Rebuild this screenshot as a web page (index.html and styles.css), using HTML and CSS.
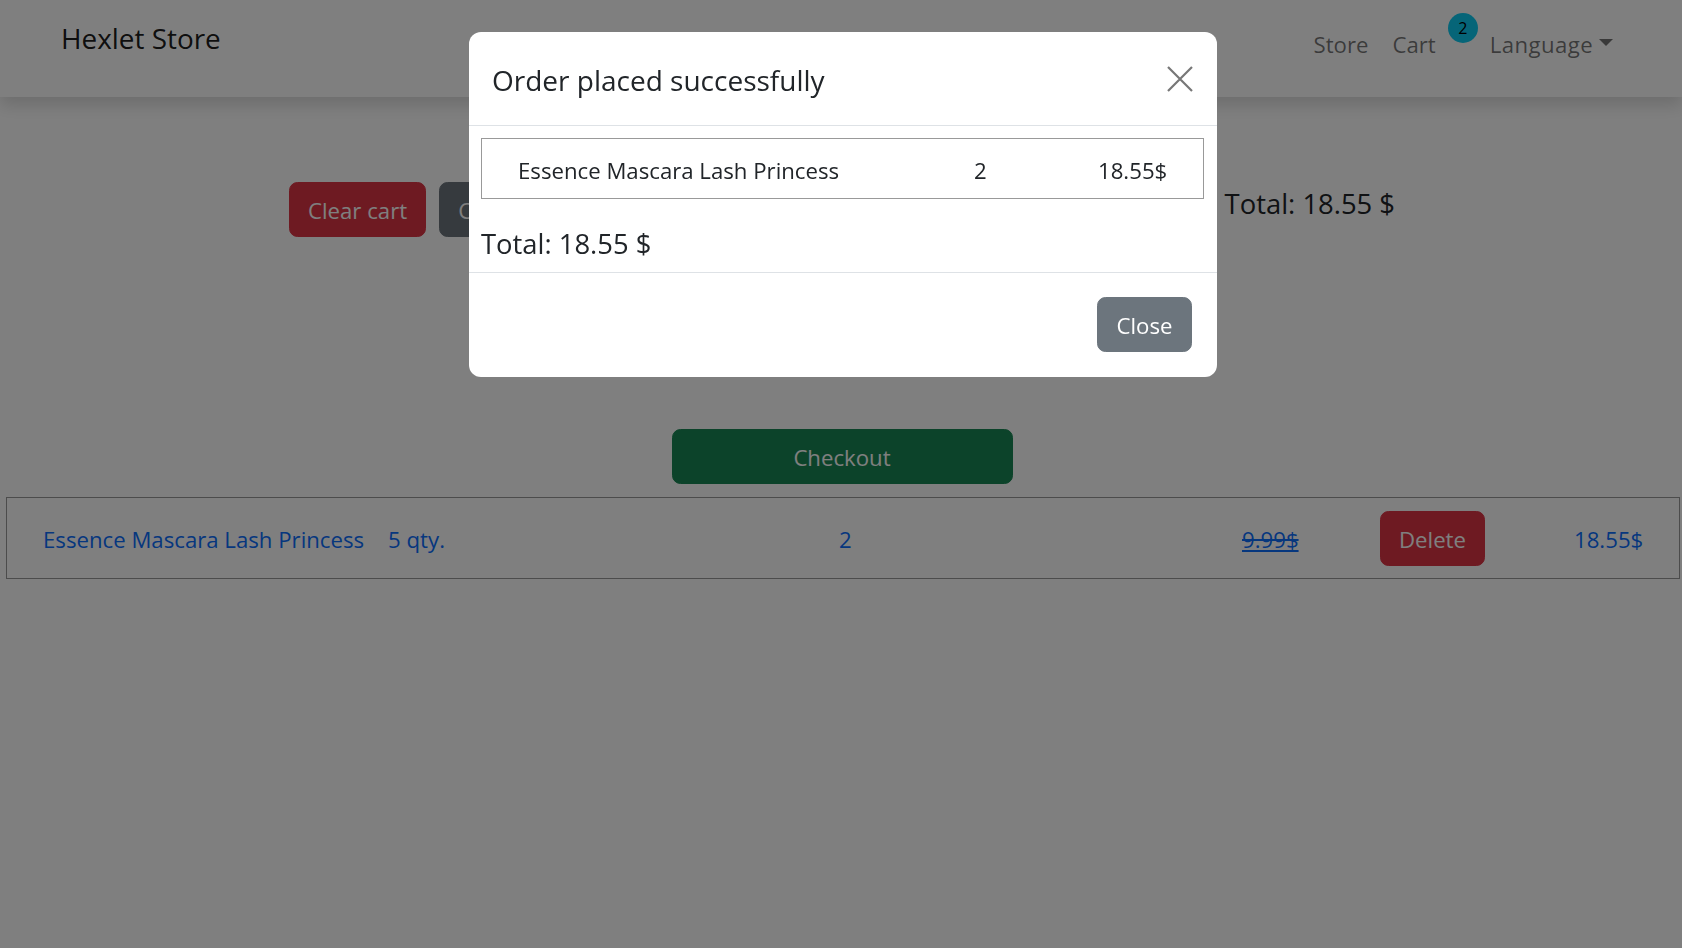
FILE: index.html
```html
<!DOCTYPE html>
<html lang="en">
<head>
<meta charset="utf-8">
<title>Hexlet Store</title>
<link rel="stylesheet" href="styles.css">
</head>
<body>
<nav class="navbar">
  <a class="brand" href="#">Hexlet Store</a>
  <div class="nav-links">
    <a class="nav-link" href="#">Store</a>
    <a class="nav-link" href="#">Cart</a>
    <span class="badge">2</span>
    <a class="nav-link dropdown" href="#"><span class="lang">Language</span><span class="caret"></span></a>
  </div>
</nav>

<main class="page">
  <div class="cart-head">
    <div class="actions">
      <button class="btn btn-danger">Clear cart</button>
      <button class="btn btn-secondary">Continue shopping</button>
    </div>
    <div class="total">Total: 18.55 $</div>
  </div>
  <div class="checkout-wrap">
    <button class="btn btn-success checkout">Checkout</button>
  </div>
  <div class="cart-row">
    <div class="cell"><a href="#">Essence Mascara Lash Princess</a><a class="qty" href="#">5 qty.</a></div>
    <div class="cell"><a href="#">2</a></div>
    <div class="cell"><a class="old-price" href="#">9.99$</a></div>
    <div class="cell"><button class="btn btn-danger">Delete</button></div>
    <div class="cell"><a href="#">18.55$</a></div>
  </div>
</main>

<div class="backdrop"></div>

<div class="modal">
  <div class="modal-header">
    <h5 class="modal-title">Order placed successfully</h5>
    <button class="btn-close" aria-label="Close">
      <svg width="26" height="26" viewBox="0 0 26 26"><path d="M1 1 L25 25 M25 1 L1 25" stroke="#777" stroke-width="2.2" fill="none"/></svg>
    </button>
  </div>
  <div class="modal-body">
    <div class="order-table">
      <span>Essence Mascara Lash Princess</span>
      <span>2</span>
      <span>18.55$</span>
    </div>
    <div class="modal-total">Total: 18.55 $</div>
  </div>
  <div class="modal-footer">
    <button class="btn btn-secondary close-btn">Close</button>
  </div>
</div>
</body>
</html>
```

FILE: styles.css
```css
* { box-sizing: border-box; }

html, body {
  margin: 0;
  padding: 0;
}

body {
  font-family: "Open Sans", "Noto Sans", sans-serif;
  font-size: 22.2px;
  line-height: 1.5;
  color: #212529;
  background: #fff;
  width: 1682px;
  height: 948px;
  overflow: hidden;
}

a { text-decoration: none; color: #0d6efd; }

/* navbar */
.navbar {
  height: 97px;
  display: flex;
  justify-content: space-between;
  align-items: flex-start;
  padding: 0 57px 0 61px;
  background: #fff;
  box-shadow: 0 8px 16px rgba(0, 0, 0, 0.15);
  position: relative;
  z-index: 1;
}

.brand {
  font-size: 27.9px;
  line-height: 42px;
  margin-top: 17px;
  color: rgba(0, 0, 0, 0.9);
}

.nav-links {
  display: flex;
  align-items: flex-start;
  margin-top: 13px;
}

.nav-link {
  display: flex;
  align-items: center;
  color: rgba(0, 0, 0, 0.55);
  padding: 0 12px;
  line-height: 33px;
  margin-top: 15px;
}

.lang { letter-spacing: 0.4px; }

.badge {
  width: 30px;
  height: 30px;
  border-radius: 50%;
  background: #0dcaf0;
  color: #000;
  font-size: 16px;
  line-height: 30px;
  text-align: center;
}

.caret {
  display: inline-block;
  width: 0;
  height: 0;
  margin-left: 6px;
  margin-top: -4px;
  border-left: 7px solid transparent;
  border-right: 7px solid transparent;
  border-top: 7px solid rgba(0, 0, 0, 0.55);
}

/* page */
.btn {
  font-family: inherit;
  font-size: 22.2px;
  line-height: 1.5;
  height: 55px;
  padding: 3px 18px 0;
  border: 1px solid transparent;
  border-radius: 8.5px;
  color: #fff;
  cursor: pointer;
}

.btn-danger { background: #dc3545; border-color: #dc3545; }
.btn-secondary { background: #6c757d; border-color: #6c757d; }
.btn-success { background: #198754; border-color: #198754; }

.cart-head {
  display: flex;
  justify-content: space-between;
  align-items: flex-start;
  padding: 0 287px 0 289px;
  margin-top: 85px;
}

.actions {
  display: flex;
  gap: 13px;
}

.total {
  font-size: 27.4px;
  line-height: 41px;
  margin-top: 1px;
}

.checkout-wrap {
  display: flex;
  justify-content: center;
  margin-top: 192px;
  padding-left: 2px;
}

.checkout { width: 341px; }

.cart-row {
  margin: 13px 2px 0 6px;
  height: 82px;
  border: 1px solid #999;
  display: grid;
  grid-template-columns: 796px 403px 138px 194px auto;
  align-items: center;
  padding-left: 36px;
}

.cell { display: flex; align-items: center; }

.cell > a { padding-top: 4px; }

.qty { margin-left: 24px; }

.old-price { text-decoration: line-through underline; }

/* modal */
.backdrop {
  position: fixed;
  inset: 0;
  background: rgba(0, 0, 0, 0.5);
  z-index: 5;
}

.modal {
  position: fixed;
  top: 32px;
  left: 469px;
  width: 748px;
  background: #fff;
  border-radius: 12px;
  z-index: 10;
  overflow: hidden;
}

.modal-header {
  display: flex;
  justify-content: space-between;
  align-items: center;
  padding: 27px 24px 24px 23px;
  border-bottom: 1px solid #dee2e6;
}

.modal-title {
  margin: 0;
  font-size: 28px;
  font-weight: 400;
  line-height: 42px;
}

.btn-close {
  background: none;
  border: 0;
  padding: 0;
  width: 26px;
  height: 26px;
  display: flex;
  margin-top: -2px;
}

.modal-body {
  padding: 12px 13px 8px 12px;
}

.order-table {
  height: 61px;
  border: 1px solid #999;
  display: grid;
  grid-template-columns: 456px 124px auto;
  align-items: center;
  padding: 5px 0 0 36px;
}

.modal-total {
  margin-top: 24px;
  font-size: 27.4px;
  line-height: 41px;
}

.modal-footer {
  display: flex;
  justify-content: flex-end;
  padding: 24px 25px 25px;
  border-top: 1px solid #dee2e6;
}

.close-btn { width: 95px; padding: 3px 0 0; }
```
